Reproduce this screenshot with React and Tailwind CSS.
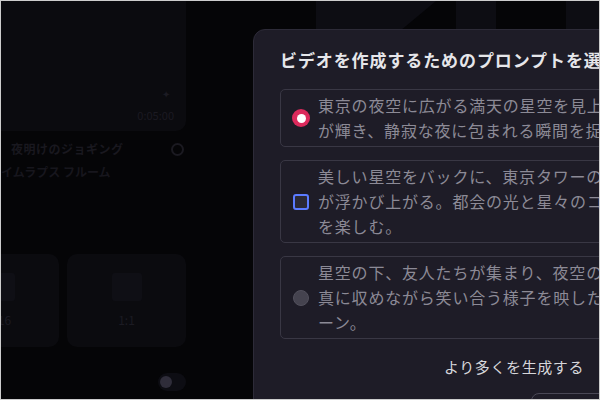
import React, { useState } from 'react';

const prompts = [
  {
    id: 1,
    lines: ['東京の夜空に広がる満天の星空を見上げ、無数の星', 'が輝き、静寂な夜に包まれる瞬間を捉えた映像。'],
  },
  {
    id: 2,
    lines: ['美しい星空をバックに、東京タワーのシルエット', 'が浮かび上がる。都会の光と星々のコントラスト', 'を楽しむ。'],
  },
  {
    id: 3,
    lines: ['星空の下、友人たちが集まり、夜空の美しさを写', '真に収めながら笑い合う様子を映した心温まるシ', 'ーン。'],
  },
];

function Marker({ kind }) {
  if (kind === 'selected') {
    return (
      <div className="w-[18px] h-[18px] rounded-full bg-[#dc2a5c] flex items-center justify-center shrink-0">
        <div className="w-[9px] h-[9px] rounded-full bg-white" />
      </div>
    );
  }
  if (kind === 'focus') {
    return (
      <div className="w-[18px] h-[18px] flex items-center justify-center shrink-0">
        <div className="w-[16px] h-[16px] rounded-[3px] border-2 border-[#5b7bff] bg-[#2b2935]" />
      </div>
    );
  }
  return (
    <div className="w-[18px] h-[18px] flex items-center justify-center shrink-0">
      <div className="w-[16px] h-[16px] rounded-full bg-[#45434f] border border-[#52505c]" />
    </div>
  );
}

export default function App() {
  const [selected, setSelected] = useState(1);

  return (
    <div
      className="w-[600px] h-[400px] relative overflow-hidden bg-[#050507] border border-[#cdcdcd] flex"
      style={{ fontFamily: '"Noto Sans CJK JP", "Noto Sans", sans-serif' }}
    >
      {/* Left panel behind the dialog */}
      <div className="w-[185px] shrink-0 flex flex-col">
        <div className="-mt-[20px] -ml-[60px] h-[150px] rounded-[10px] bg-[#0b0b0f] flex flex-col items-end justify-end pr-[12px] pb-[8px]">
          <span className="text-[10px] text-[#1c1b23] mr-[4px]">✦</span>
          <span className="text-[11px] text-[#1b1a22] mt-[6px]">0:05:00</span>
        </div>

        <div className="flex items-center justify-between mt-[9px] pl-[10px]">
          <span className="text-[12px] font-bold text-[#19181f] tracking-[0.5px] leading-[18px]">夜明けのジョギング</span>
          <div className="w-[13px] h-[13px] rounded-full border-2 border-[#1b1a21] mr-[2px]" />
        </div>
        <div className="-ml-[12px] mt-[5px] text-[12px] font-bold text-[#17161d] leading-[18px]">タイムラプス フルーム</div>

        <div className="-ml-[188px] mt-[73px] grid grid-cols-3 gap-[8px] w-[373px]">
          {['16:9', '9:16', '1:1'].map((r) => (
            <div key={r} className="h-[93px] rounded-[10px] bg-[#0b0b0f] flex flex-col items-center justify-center gap-[10px]">
              <div className="w-[30px] h-[28px] rounded-[3px] bg-[#0f0f15]" />
              <span className="text-[12px] text-[#1c1b23]">{r}</span>
            </div>
          ))}
        </div>

        <div className="flex justify-end mt-[26px]">
          <div className="w-[28px] h-[18px] rounded-full bg-[#0d0d13] flex items-center pl-[2px]">
            <div className="w-[12px] h-[12px] rounded-full bg-[#2f2d3a]" />
          </div>
        </div>
      </div>

      {/* Thumbnails row behind the dialog */}
      <div className="ml-[130px] flex gap-[20px] h-[28px]">
        <div className="w-[120px] h-full bg-[#0d0d13] [clip-path:polygon(0_0,100%_0,72%_100%,0_100%)]" />
        <div className="w-[40px] h-full bg-[#0d0d13]" />
        <div className="w-[50px] h-full ml-[50px] bg-[#0d0d13]" />
      </div>

      {/* Dialog */}
      <div className="absolute left-[252px] top-[28px] w-[540px] h-[420px] rounded-t-[12px] bg-[#1e1c27] border border-[#2d2b38] pl-[26px] pt-[18px]">
        <h2 className="text-[17px] font-bold text-[#e6e6ea] tracking-[0.9px] leading-[24px] whitespace-nowrap">
          ビデオを作成するためのプロンプトを選択してください
        </h2>

        <div className="mt-[17px] w-[468px] flex flex-col gap-[13px]">
          {prompts.map((p) => (
            <button
              key={p.id}
              onClick={() => setSelected(p.id)}
              className="flex items-center gap-[8px] pl-[11px] py-[3px] border border-[#393744] rounded-[5px] text-left"
            >
              <Marker kind={p.id === selected ? 'selected' : p.id === 2 ? 'focus' : 'idle'} />
              <div className="text-[16px] tracking-[0.8px] leading-[25px] text-[#8c8a96]">
                {p.lines.map((l) => (
                  <div key={l} className="whitespace-nowrap">{l}</div>
                ))}
              </div>
            </button>
          ))}
        </div>

        <div className="w-[468px] mt-[16px] text-center text-[15px] tracking-[0.6px] leading-[24px] text-[#d6d6da]">
          より多くを生成する
        </div>

        <div className="mt-[14px] ml-[251px] flex gap-[10px]">
          <div className="w-[120px] h-[40px] rounded-[8px] border border-[#4a4856]" />
        </div>
      </div>
    </div>
  );
}
